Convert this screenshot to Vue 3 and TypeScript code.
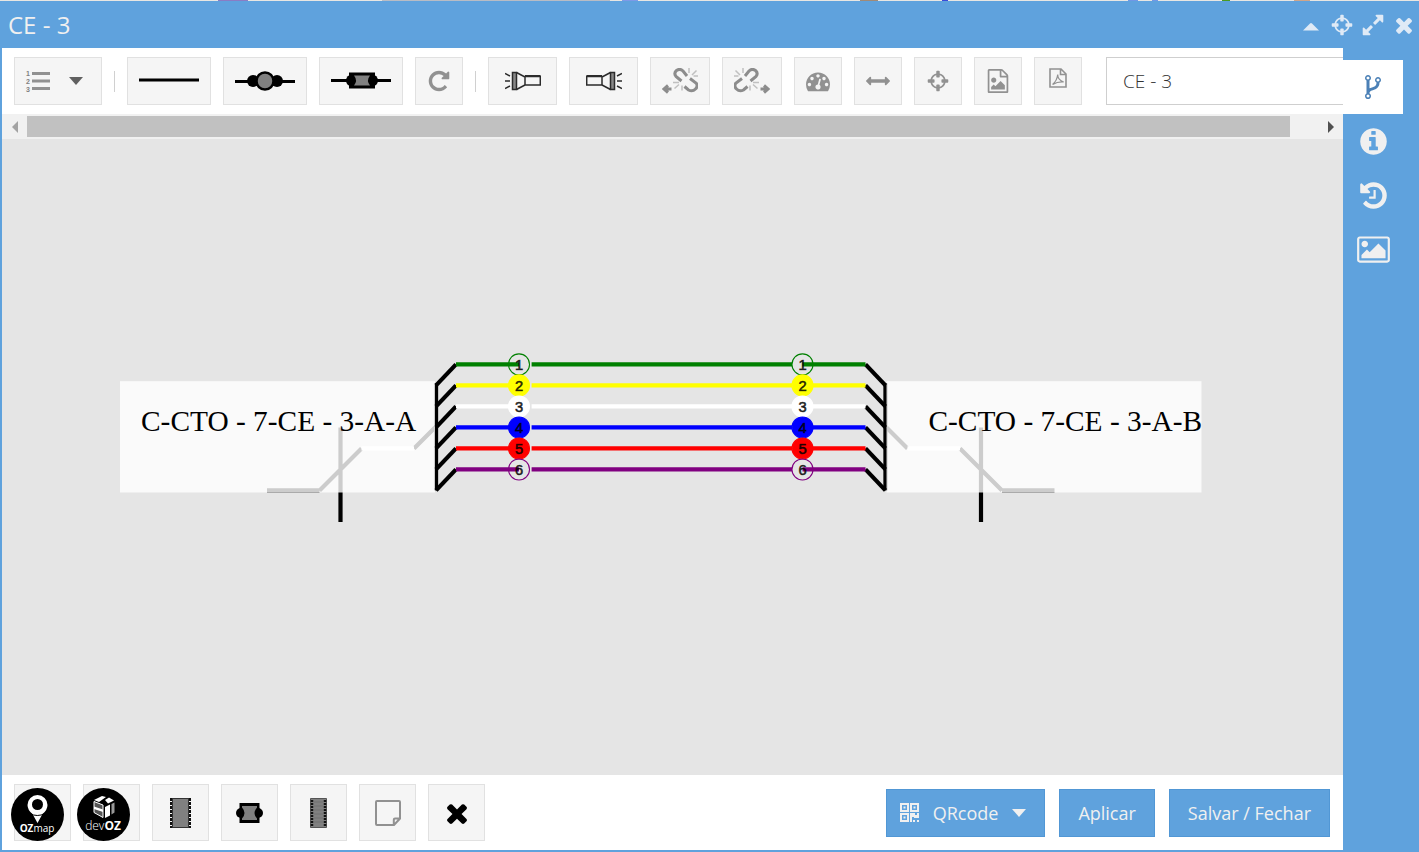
<script setup lang="ts">
import { ref } from 'vue'

const icons = {
  crosshairs:
    'M1325 1024h-109q-26 0-45-19t-19-45v-128q0-26 19-45t45-19h109q-32-108-112.5-188.5t-188.5-112.5v109q0 26-19 45t-45 19h-128q-26 0-45-19t-19-45v-109q-108 32-188.5 112.5t-112.5 188.5h109q26 0 45 19t19 45v128q0 26-19 45t-45 19h-109q32 108 112.5 188.5t188.5 112.5v-109q0-26 19-45t45-19h128q26 0 45 19t19 45v109q108-32 188.5-112.5t112.5-188.5zm339-192v128q0 26-19 45t-45 19h-143q-37 161-154.5 278.5t-278.5 154.5v143q0 26-19 45t-45 19h-128q-26 0-45-19t-19-45v-143q-161-37-278.5-154.5t-154.5-278.5h-143q-26 0-45-19t-19-45v-128q0-26 19-45t45-19h143q37-161 154.5-278.5t278.5-154.5v-143q0-26 19-45t45-19h128q26 0 45 19t19 45v143q161 37 278.5 154.5t154.5 278.5h143q26 0 45 19t19 45z',
  times:
    'M1490 1322q0 40-28 68l-136 136q-28 28-68 28t-68-28l-294-294-294 294q-28 28-68 28t-68-28l-136-136q-28-28-28-68t28-68l294-294-294-294q-28-28-28-68t28-68l136-136q28-28 68-28t68 28l294 294 294-294q28-28 68-28t68 28l136 136q28 28 28 68t-28 68l-294 294 294 294q28 28 28 68z',
  expand:
    'M883 1056q0 13-10 23l-332 332 144 144q19 19 19 45t-19 45-45 19h-448q-26 0-45-19t-19-45v-448q0-26 19-45t45-19 45 19l144 144 332-332q10-10 23-10t23 10l114 114q10 10 10 23zm781-864v448q0 26-19 45t-45 19-45-19l-144-144-332 332q-10 10-23 10t-23-10l-114-114q-10-10-10-23t10-23l332-332-144-144q-19-19-19-45t19-45 45-19h448q26 0 45 19t19 45z',
  info: 'M1152 1376v-160q0-14-9-23t-23-9h-96v-512q0-14-9-23t-23-9h-320q-14 0-23 9t-9 23v160q0 14 9 23t23 9h96v320h-96q-14 0-23 9t-9 23v160q0 14 9 23t23 9h448q14 0 23-9t9-23zm-128-896v-160q0-14-9-23t-23-9h-192q-14 0-23 9t-9 23v160q0 14 9 23t23 9h192q14 0 23-9t9-23zm640 416q0 209-103 385.5t-279.5 279.5-385.5 103-385.5-103-279.5-279.5-103-385.5 103-385.5 279.5-279.5 385.5-103 385.5 103 279.5 279.5 103 385.5z',
  history:
    'M1664 896q0 156-61 298t-164 245-245 164-298 61q-172 0-327-72.5t-264-204.5q-7-10-6.5-22.5t8.5-20.5l137-138q10-9 25-9 16 2 23 12 73 95 179 147t225 52q104 0 198.5-40.5t163.5-109.5 109.5-163.5 40.5-198.5-40.5-198.5-109.5-163.5-163.5-109.5-198.5-40.5q-98 0-188 35.5t-160 101.5l137 138q31 30 14 69-17 40-59 40h-448q-26 0-45-19t-19-45v-448q0-42 40-59 39-17 69 14l130 129q107-101 244.5-156.5t284.5-55.5q156 0 298 61t245 164 164 245 61 298zm-640-288v448q0 14-9 23t-23 9h-320q-14 0-23-9t-9-23v-64q0-14 9-23t23-9h224v-352q0-14 9-23t23-9h64q14 0 23 9t9 23z',
  picture:
    'M704 576q0 80-56 136t-136 56-136-56-56-136 56-136 136-56 136 56 56 136zm1024 384v448h-1408v-192l320-320 160 160 512-512zm96-704h-1600q-13 0-22.5 9.5t-9.5 22.5v1216q0 13 9.5 22.5t22.5 9.5h1600q13 0 22.5-9.5t9.5-22.5v-1216q0-13-9.5-22.5t-22.5-9.5zm160 32v1216q0 66-47 113t-113 47h-1600q-66 0-113-47t-47-113v-1216q0-66 47-113t113-47h1600q66 0 113 47t47 113z',
  fork: 'M672 1472q0-40-28-68t-68-28-68 28-28 68 28 68 68 28 68-28 28-68zm0-1152q0-40-28-68t-68-28-68 28-28 68 28 68 68 28 68-28 28-68zm640 128q0-40-28-68t-68-28-68 28-28 68 28 68 68 28 68-28 28-68zm96 0q0 52-26 96.5t-70 69.5q-2 287-226 414-67 38-203 81-128 40-169.5 71t-41.5 100v26q44 25 70 69.5t26 96.5q0 80-56 136t-136 56-136-56-56-136q0-52 26-96.5t70-69.5v-820q-44-25-70-69.5t-26-96.5q0-80 56-136t136-56 136 56 56 136q0 52-26 96.5t-70 69.5v497q54-26 154-57 55-17 87.5-29.5t70.5-31 59-39.5 40.5-51 28-69.5 8.5-91.5q-44-25-70-69.5t-26-96.5q0-80 56-136t136-56 136 56 56 136z',
  repeat:
    'M1664 256v448q0 26-19 45t-45 19h-448q-42 0-59-40-17-39 14-69l138-138q-148-137-349-137-104 0-198.5 40.5t-163.5 109.5-109.5 163.5-40.5 198.5 40.5 198.5 109.5 163.5 163.5 109.5 198.5 40.5q119 0 225-52t179-147q7-10 23-12 15 0 25 9l137 138q9 8 9.5 20.5t-7.5 22.5q-109 132-264 204.5t-327 72.5q-156 0-298-61t-245-164-164-245-61-298 61-298 164-245 245-164 298-61q147 0 284.5 55.5t244.5 156.5l130-129q29-31 70-14 39 17 39 59z',
  gauge:
    'M384 1152q0-53-37.5-90.5t-90.5-37.5-90.5 37.5-37.5 90.5 37.5 90.5 90.5 37.5 90.5-37.5 37.5-90.5zm192-448q0-53-37.5-90.5t-90.5-37.5-90.5 37.5-37.5 90.5 37.5 90.5 90.5 37.5 90.5-37.5 37.5-90.5zm428 481l101-382q6-26-7.5-48.5t-38.5-29.5-48 6.5-30 39.5l-101 382q-60 5-107 43.5t-63 98.5q-20 77 20 146t117 89 146-20 89-117q16-60-6-117t-72-91zm660-33q0-53-37.5-90.5t-90.5-37.5-90.5 37.5-37.5 90.5 37.5 90.5 90.5 37.5 90.5-37.5 37.5-90.5zm-640-640q0-53-37.5-90.5t-90.5-37.5-90.5 37.5-37.5 90.5 37.5 90.5 90.5 37.5 90.5-37.5 37.5-90.5zm448 192q0-53-37.5-90.5t-90.5-37.5-90.5 37.5-37.5 90.5 37.5 90.5 90.5 37.5 90.5-37.5 37.5-90.5zm320 448q0 261-141 483-19 29-54 29h-1402q-35 0-54-29-141-221-141-483 0-182 71-348t191-286 286-191 348-71 348 71 286 191 191 286 71 348z',
  arrows:
    'M1792 896q0 26-19 45l-256 256q-19 19-45 19t-45-19-19-45v-128h-1024v128q0 26-19 45t-45 19-45-19l-256-256q-19-19-19-45t19-45l256-256q19-19 45-19t45 19 19 45v128h1024v-128q0-26 19-45t45-19 45 19l256 256q19 19 19 45z',
  fileImage:
    'M1596 380q28 28 48 76t20 88v1152q0 40-28 68t-68 28h-1344q-40 0-68-28t-28-68v-1600q0-40 28-68t68-28h896q40 0 88 20t76 48zm-444-244v376h376q-10-29-22-41l-313-313q-12-12-41-22zm384 1528v-1024h-416q-40 0-68-28t-28-68v-416h-768v1536h1280zm-128-448v320h-1024v-192l192-192 128 128 384-384zm-832-192q-80 0-136-56t-56-136 56-136 136-56 136 56 56 136-56 136-136 56z'
}

const boxName = ref('CE - 3')
const thumbShare = ref(97.8)

const windowActions = [
  { label: 'Centralizar', path: icons.crosshairs },
  { label: 'Expandir', path: icons.expand },
  { label: 'Fechar', path: icons.times }
]

const tools = [
  { label: 'Medir potência', path: icons.gauge },
  { label: 'Ajustar largura', path: icons.arrows },
  { label: 'Centralizar diagrama', path: icons.crosshairs },
  { label: 'Exportar imagem', path: icons.fileImage }
]

const tabs = [
  { label: 'Diagrama', path: icons.fork, box: '0 0 1792 1792', size: 'i28' },
  { label: 'Informações', path: icons.info, box: '0 0 1792 1792', size: 'i31' },
  { label: 'Histórico', path: icons.history, box: '0 0 1792 1792', size: 'i31' },
  { label: 'Imagens', path: icons.picture, box: '0 0 2048 1792', size: 'i-wide' }
]
const activeTab = ref(0)

interface Fiber {
  id: number
  color: string
  open: boolean
}
const fibers: Fiber[] = [
  { id: 1, color: '#008000', open: true },
  { id: 2, color: '#ffff00', open: false },
  { id: 3, color: '#ffffff', open: false },
  { id: 4, color: '#0000ff', open: false },
  { id: 5, color: '#ff0000', open: false },
  { id: 6, color: '#800080', open: true }
]
const fiberGap = 20

const cables = [
  { name: 'C-CTO - 7-CE - 3-A-A', side: 'translate(0 0)', textX: -300 },
  { name: 'C-CTO - 7-CE - 3-A-B', side: 'translate(390 0) scale(-1 1)', textX: 450 }
]
</script>

<template>
  <div class="page">
    <div class="map-strip"></div>
    <section class="window">
      <header class="titlebar">
        <h1>CE - 3</h1>
        <div class="window-actions">
          <button type="button" aria-label="Recolher">
            <svg class="i24" viewBox="0 0 24 24"><path d="M4 17.500 11 10.500q1-1 2 0L20 17.500z" /></svg>
          </button>
          <button v-for="a in windowActions" :key="a.label" type="button" :aria-label="a.label">
            <svg class="i24" viewBox="0 0 1792 1792"><path :d="a.path" /></svg>
          </button>
        </div>
      </header>

      <div class="body">
        <main class="editor">
          <div class="toolbar">
            <button type="button" class="tool menu" aria-label="Numeração">
              <svg class="list" viewBox="0 0 24 24">
                <path d="M6 4.500h18M6 12h18M6 19.500h18" stroke="#919191" stroke-width="3" />
                <g class="list-digits"><text x="0" y="7">1</text><text x="0" y="15">2</text><text x="0" y="23">3</text></g>
              </svg>
              <svg class="caret" viewBox="0 0 14 8"><path d="M0 0h14L7 8z" fill="#606060" /></svg>
            </button>
            <span class="sep"></span>
            <button type="button" class="tool wide" aria-label="Conexão direta">
              <svg class="splice" viewBox="0 0 60 22"><path d="M0 10h60" stroke="#000" stroke-width="3" /></svg>
            </button>
            <button type="button" class="tool wide" aria-label="Fusão">
              <svg class="splice" viewBox="0 0 60 22">
                <path d="M0 11.500h60" stroke="#000" stroke-width="3" />
                <circle cx="18" cy="11" r="6" /><circle cx="42" cy="11" r="6" />
                <circle cx="30" cy="11" r="8.500" fill="#808080" stroke="#000" stroke-width="2.500" />
              </svg>
            </button>
            <button type="button" class="tool wide" aria-label="Conector">
              <svg class="splice" viewBox="0 0 60 22">
                <path d="M0 10.500h60" stroke="#000" stroke-width="3" />
                <path d="M18 2.500h26v16H18z" /><circle cx="21" cy="10.500" r="6" /><circle cx="41" cy="10.500" r="6" />
                <path d="M23 5.500h16q-4 5 0 10H23q4-5 0-10z" fill="#808080" />
              </svg>
            </button>
            <button type="button" class="tool" aria-label="Refazer">
              <svg class="i24 muted" viewBox="0 0 1792 1792"><path :d="icons.repeat" /></svg>
            </button>
            <span class="sep"></span>
            <button v-for="flip in [false, true]" :key="'t' + flip" type="button" class="tool torch-tool" :aria-label="flip ? 'Iluminar à direita' : 'Iluminar à esquerda'">
              <svg class="torch" viewBox="0 0 36 20">
                <g :transform="flip ? 'translate(36 0) scale(-1 1)' : undefined" fill="none" stroke="#2b2b2b" stroke-width="1.500">
                  <path d="M7.500 1.500h4v17h-4z" fill="#888" />
                  <path d="M11.500 1.500 20 6v8l-8.500 4.500M20 5.500h15.300v8.500H20z" />
                  <path d="M20 5h15.500" stroke-width="2" />
                  <path d="M0 2.500 5 5M0 10h5M0 17.500 5 15" />
                </g>
              </svg>
            </button>
            <button v-for="flip in [false, true]" :key="'u' + flip" type="button" class="tool unlink-tool" :aria-label="flip ? 'Desconectar à direita' : 'Desconectar à esquerda'">
              <svg class="unlink" viewBox="0 0 36 26">
                <g :transform="flip ? 'translate(36 0) scale(-1 1)' : undefined" fill="none" stroke="#8c8c8c">
                  <path d="M19.500 13 14 8.500Q11.500 5 14.500 2.500 18 0 21 3l4 5M22.500 18.500l4 3.500q4 2 7-1t.5-6L28 10.500" stroke-width="3" />
                  <path d="M27 0v5M34.500 2.500 30 7M36 8h-4.500M11 14.500h6M12.500 20.500 17 16.500M20 17.500v5" stroke="#c0c0c0" stroke-width="1.500" />
                  <path d="M9.500 21H3M6 17.500 2 21 6 24.500" stroke-width="3" />
                </g>
              </svg>
            </button>
            <button v-for="t in tools" :key="t.label" type="button" class="tool" :aria-label="t.label">
              <svg class="i24 muted" viewBox="0 0 1792 1792"><path :d="t.path" /></svg>
            </button>
            <button type="button" class="tool pdf-tool" aria-label="Exportar PDF">
              <svg class="pdf" viewBox="0 0 18 20" fill="none" stroke="#919191">
                <path d="M1 1h11l5 5v13H1zM11.500 1v5.500H17" stroke-width="1.600" />
                <path d="M3.500 16.500Q8 13 8.700 6.500q0 5.500 6 7.500-6-.5-11 2.500" stroke-width="1.200" />
              </svg>
            </button>
            <input v-model="boxName" class="name" type="text" aria-label="Nome da caixa" />
          </div>

          <div class="scrollbar">
            <button type="button" aria-label="Rolar para a esquerda"><svg viewBox="0 0 6 12"><path d="M6 0v12L0 6z" fill="#a3a3a3" /></svg></button>
            <div class="track"><div class="thumb" :style="{ width: thumbShare + '%' }"></div></div>
            <button type="button" aria-label="Rolar para a direita"><svg viewBox="0 0 6 12"><path d="M0 0v12l6-6z" fill="#505050" /></svg></button>
          </div>

          <div class="canvas">
            <svg class="diagram" role="img" aria-label="Diagrama de fusões">
              <g transform="translate(454 225.400) scale(1.050)" stroke-width="4" fill="none">
                <g v-for="c in cables" :key="c.name">
                  <g :transform="c.side">
                    <g stroke="#000">
                      <path d="M-110 60v90M-180 120h50M-130 120-90 80M-40 80-20 60" />
                    </g>
                    <path d="M-90 80h50" stroke="#fff" />
                    <path d="M-19 18v102" stroke="#000" stroke-width="4" />
                    <rect class="cover" x="-320" y="16" width="300" height="106" />
                    <g stroke="#000">
                      <path v-for="(f, i) in fibers" :key="f.id" :d="`M-19 ${i * fiberGap + 20}L0 ${i * fiberGap}`" />
                    </g>
                  </g>
                  <text class="cable-name" :x="c.textX" y="63">{{ c.name }}</text>
                </g>
                <g v-for="(f, i) in fibers" :key="f.id" :transform="`translate(0 ${i * fiberGap})`">
                  <path d="M0 0h60M72 0h248M330 0h60" :stroke="f.color" />
                  <g v-for="x in [60, 330]" :key="x">
                    <circle :cx="x" cy="0" r="10" :stroke="f.color" stroke-width="1" :fill="f.open ? 'none' : f.color" />
                    <text class="fiber-id" :x="x" y="5">{{ f.id }}</text>
                  </g>
                </g>
              </g>
            </svg>
          </div>

          <footer class="footer">
            <div class="brands">
              <button type="button" class="part" aria-label="OZmap"></button>
              <button type="button" class="part" aria-label="devOZ"></button>
              <div class="logos">
                <svg viewBox="0 0 53 53">
                  <circle cx="26.500" cy="26.500" r="26.500" />
                  <path d="M16.500 17a10 10 0 0 1 20 0q0 5-5 9L26.500 35 21.500 26Q16.500 22 16.500 17z" fill="#fff" />
                  <circle cx="26.500" cy="16.500" r="5.500" />
                  <path d="M19 25.500q7 4 15 0" fill="none" stroke="#000" stroke-width="1" />
                  <text x="26" y="44" class="logo-text"><tspan class="heavy">OZ</tspan>map</text>
                </svg>
                <svg viewBox="0 0 53 53">
                  <circle cx="26.500" cy="26.500" r="26.500" />
                  <path d="m17 12 8-4 4 1-7 5zM28 12l4-2.500 5 3-6 3z" fill="#fff" />
                  <path d="M17 13.500 26 17v12.500l-9-5z" fill="#555" stroke="#fff" />
                  <path d="m17 18.500 9 3v2.500l-9-3z" fill="#fff" />
                  <path d="m28 19 5-2.500v11L28 30z" fill="#fff" />
                  <path d="m34.500 16 3-1.500v10l-3 2z" fill="#999" />
                  <text x="26" y="42" class="logo-text"><tspan class="thin">dev</tspan><tspan class="heavy large">OZ</tspan></text>
                </svg>
              </div>
            </div>
            <button type="button" class="part" aria-label="Splitter">
              <svg class="chip" viewBox="0 0 21 30">
                <path d="M1.500 0v30M19.500 0v30" stroke="#111" stroke-width="3" stroke-dasharray="3 1" />
                <path d="M2.500 .5h16v29h-16z" fill="#808080" stroke="#333" />
              </svg>
            </button>
            <button type="button" class="part" aria-label="Conector">
              <svg class="coupler" viewBox="0 0 27 20">
                <path d="M3.500 0h20v20h-20z" /><circle cx="5" cy="10" r="5" /><circle cx="22" cy="10" r="5" />
                <path d="M6 3h15v1.500q-5 5.500 0 11V17H6v-1.500q5-5.500 0-11z" fill="#808080" />
              </svg>
            </button>
            <button type="button" class="part" aria-label="DIO">
              <svg class="rack" viewBox="0 0 17 30">
                <path d="M.5 .5h16v29H.5z" fill="#808080" stroke="#555" />
                <path d="M2 2v27M15 2v27" stroke="#111" stroke-width="2.500" stroke-dasharray="2 1" />
                <path d="M4 4h9M4 8h9M4 12h9M4 16h9M4 20h9M4 24h9" stroke="#707070" stroke-width="1" />
              </svg>
            </button>
            <button type="button" class="part" aria-label="Nota">
              <svg class="note" viewBox="0 0 26 26" fill="none" stroke="#919191" stroke-width="2">
                <path d="M2 1h22q1 0 1 1v16.500L19 25H2q-1 0-1-1V2q0-1 1-1zM25 18.500h-5q-1.200 0-1.200 1.200V25" />
              </svg>
            </button>
            <button type="button" class="part" aria-label="Excluir">
              <svg class="i30" viewBox="0 0 1792 1792"><path :d="icons.times" /></svg>
            </button>

            <div class="actions">
              <button type="button" class="primary">
                <svg class="qr" viewBox="0 0 19 19">
                  <path fill-rule="evenodd" d="M0 0h9v9H0zM2 2v5h5V2zM10 0h9v9h-9zM12 2v5h5V2zM0 10h9v9H0zM2 12v5h5v-5zM3.500 3.500h2v2h-2zM13.500 3.500h2v2h-2zM3.500 13.500h2v2h-2zM10 10h5v2h2v-2h2v5h-5v-1h-2v5h-2zM13 17h2v2h-2zM17 17h2v2h-2z" />
                </svg>
                <span>QRcode</span>
                <svg class="caret" viewBox="0 0 14 8"><path d="M0 0h14L7 8z" /></svg>
              </button>
              <button type="button" class="primary">Aplicar</button>
              <button type="button" class="primary">Salvar / Fechar</button>
            </div>
          </footer>
        </main>

        <nav class="tabs">
          <button v-for="(t, i) in tabs" :key="t.label" type="button" :class="{ active: i === activeTab }" :aria-label="t.label" @click="activeTab = i">
            <svg :class="t.size" :viewBox="t.box"><path :d="t.path" /></svg>
          </button>
        </nav>
      </div>
    </section>
  </div>
</template>

<style>
html,
body,
#app {
  height: 100%;
}
body {
  margin: 0;
}
</style>

<style scoped>
.page {
  display: flex;
  flex-direction: column;
  height: 100%;
  overflow: hidden;
  font-family: 'Open Sans', 'Noto Sans', sans-serif;
}
.page * {
  box-sizing: border-box;
}
.map-strip {
  flex: none;
  height: 1px;
  background: linear-gradient(
    90deg,
    #e8e6e2 0 218px, #8a7cc4 218px 248px, #e8e6e2 248px 382px, #b9bcc4 382px 610px, #e8e6e2 610px 622px, #7d9ae8 622px 638px,
    #e8e6e2 638px 860px, #a08a78 860px 878px, #e8e6e2 878px 942px, #3a4bd8 942px 948px, #e8e6e2 948px 1128px, #6f97e6 1128px 1138px,
    #e8e6e2 1138px 1152px, #6f97e6 1152px 1158px, #e8e6e2 1158px 1222px, #4b9a22 1222px 1230px, #e8e6e2 1230px 1294px, #cfa58a 1294px 1310px, #e8e6e2 1310px
  );
}
button {
  display: flex;
  align-items: center;
  justify-content: center;
  margin: 0;
  padding: 0;
  border: 0;
  background: none;
  font: inherit;
  cursor: pointer;
}
svg {
  flex: none;
  display: block;
}
.i24 { width: 24px; height: 24px; }
.i28 { width: 28px; height: 28px; }
.i30 { width: 30px; height: 30px; }
.i31 { width: 31px; height: 31px; }
.i-wide { width: 35px; height: 31px; }
.muted { fill: #919191; }

.window {
  flex: 1;
  min-height: 0;
  display: flex;
  flex-direction: column;
  padding: 0 0 2px 2px;
  background: #5fa2dd;
}
.titlebar {
  flex: none;
  display: flex;
  align-items: center;
  justify-content: space-between;
  height: 47px;
  padding: 0 3px 0 6px;
}
h1 {
  margin: 0;
  color: #f0f0f0;
  font-size: 24px;
  font-weight: 400;
  line-height: 48px;
}
.window-actions {
  display: flex;
  gap: 7px;
  fill: #dfeaf6;
}
.body {
  flex: 1;
  min-height: 0;
  display: flex;
}
.editor {
  flex: 1;
  min-width: 0;
  display: flex;
  flex-direction: column;
  background: #fff;
}
.toolbar {
  flex: none;
  display: flex;
  align-items: center;
  gap: 12px;
  height: 66px;
  padding-left: 12px;
}
.tool {
  flex: none;
  width: 48px;
  height: 48px;
  border: 1px solid #e1e1e1;
  background: #f5f5f5;
}
.menu {
  justify-content: flex-start;
  width: 88px;
  gap: 19px;
  padding-left: 11px;
}
.wide { width: 84px; }
.torch-tool { width: 69px; }
.unlink-tool { width: 60px; }
.sep {
  flex: none;
  width: 1px;
  height: 21px;
  background: #d0d0d0;
}
.list {
  width: 24px;
  height: 24px;
  overflow: visible;
}
.list-digits {
  fill: #808080;
  font-family: 'Liberation Sans', sans-serif;
  font-size: 7px;
  font-weight: 700;
}
.caret { width: 14px; height: 8px; }
.splice { width: 60px; height: 22px; }
.torch { width: 36px; height: 20px; }
.unlink { width: 36px; height: 26px; }
.pdf-tool {
  align-items: flex-start;
  padding-top: 10px;
}
.pdf { width: 18px; height: 20px; }
.name {
  flex: 1;
  min-width: 0;
  height: 48px;
  margin-left: 12px;
  padding: 0 16px;
  border: 1px solid #cfcfcf;
  border-right: 0;
  border-radius: 0;
  background: #fff;
  color: #333;
  font-family: inherit;
  font-size: 19px;
  font-weight: 300;
}
.scrollbar {
  flex: none;
  display: flex;
  height: 25px;
  padding: 2px 0;
  background: #f1f1f1;
}
.scrollbar button {
  flex: none;
  width: 25px;
}
.scrollbar svg { width: 6px; height: 12px; }
.track { flex: 1; }
.thumb {
  height: 100%;
  background: #c1c1c1;
}
.canvas {
  flex: 1;
  min-height: 0;
  overflow: hidden;
  background: #e5e5e5;
}
.diagram {
  width: 100%;
  height: 100%;
}
.cover { fill: rgba(255, 255, 255, 0.8); }
.cable-name {
  fill: #000;
  font-family: 'Liberation Serif', serif;
  font-size: 28px;
}
.fiber-id {
  fill: #000;
  fill-opacity: 0.8;
  stroke: #000;
  stroke-opacity: 0.7;
  stroke-width: 0.7px;
  font-family: 'Liberation Sans', sans-serif;
  font-size: 14px;
  text-anchor: middle;
}
.footer {
  flex: none;
  display: flex;
  align-items: center;
  gap: 12px;
  height: 75px;
  padding: 0 13px 0 12px;
}
.brands {
  position: relative;
  display: flex;
  gap: 12px;
}
.part {
  flex: none;
  width: 57px;
  height: 57px;
  border: 1px solid #e1e1e1;
  background: #f5f5f5;
}
.logos {
  position: absolute;
  top: 4px;
  left: -3px;
  display: flex;
  gap: 13px;
  pointer-events: none;
}
.logos svg { width: 53px; height: 53px; }
.logo-text {
  fill: #fff;
  font-size: 10px;
  text-anchor: middle;
}
.heavy { font-weight: 700; }
.large { font-size: 12px; }
.thin { font-weight: 300; font-size: 12px; }
.chip { width: 21px; height: 30px; }
.coupler { width: 27px; height: 20px; }
.rack { width: 17px; height: 30px; }
.note { width: 26px; height: 26px; }
.actions {
  display: flex;
  gap: 14px;
  margin-left: auto;
}
.primary {
  height: 48px;
  padding: 0 18px;
  border: 1px solid #5197d5;
  background: #5fa2dd;
  color: #f0f0f0;
  fill: #f0f0f0;
  font-size: 18px;
  white-space: nowrap;
}
.primary .qr {
  width: 19px;
  height: 19px;
  margin: 0 14px 0 -5px;
}
.primary .caret { margin-left: 14px; }
.tabs {
  flex: none;
  width: 76px;
  padding-top: 12px;
}
.tabs button {
  width: 60px;
  height: 54px;
  fill: #f0f0f0;
}
.tabs .active {
  background: #fff;
  fill: #4b80b6;
}
</style>
